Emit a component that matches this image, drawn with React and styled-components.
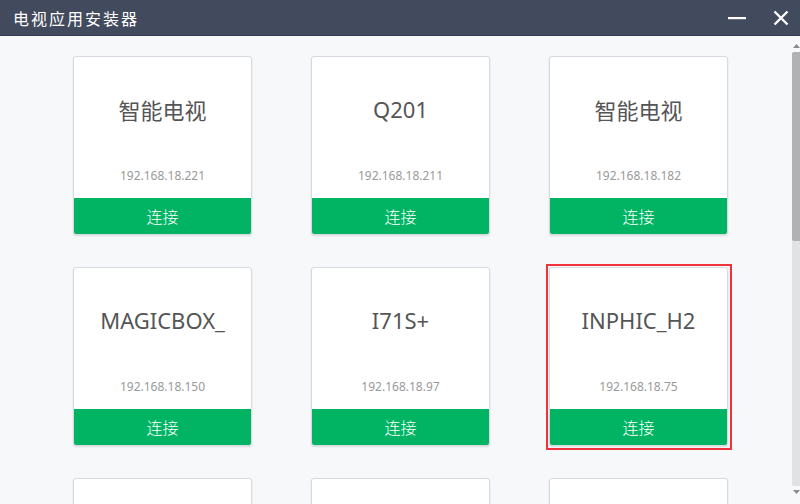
import React from "react";
import styled, { createGlobalStyle } from "styled-components";

const GlobalStyle = createGlobalStyle`
  html, body {
    margin: 0;
    padding: 0;
    width: 800px;
    height: 504px;
    overflow: hidden;
    background: #f7f8fa;
    font-family: "Noto Sans CJK SC", "Noto Sans", "Liberation Sans", sans-serif;
  }
`;

const Window = styled.div`
  width: 800px;
  height: 504px;
  display: flex;
  flex-direction: column;
  background: #f7f8fa;
`;

const TitleBar = styled.div`
  height: 35px;
  flex: 0 0 35px;
  display: flex;
  align-items: center;
  padding: 0 0 0 13px;
  background: #424a5e;
  border-bottom: 1px solid #353c4d;
  color: #fff;
  font-size: 16px;
`;

const Title = styled.div`
  flex: 1;
  letter-spacing: 2px;
`;

const WinButton = styled.button`
  width: 30px;
  height: 35px;
  border: 0;
  padding: 0;
  margin-right: ${(p) => p.$mr || 0}px;
  background: transparent;
  display: flex;
  align-items: center;
  justify-content: center;
  cursor: pointer;
`;

const Body = styled.div`
  flex: 1;
  display: flex;
  min-height: 0;
`;

const Content = styled.div`
  flex: 1;
  overflow: hidden;
  padding: 20px 0 0 73px;
`;

const Grid = styled.div`
  display: grid;
  grid-template-columns: repeat(3, 179px);
  grid-auto-rows: 179px;
  column-gap: 59px;
  row-gap: 32px;
`;

const Card = styled.div`
  position: relative;
  box-sizing: border-box;
  display: flex;
  flex-direction: column;
  background: #fff;
  border: 1px solid #d7dae1;
  border-radius: 3px;
  box-shadow: 0 1px 2px rgba(0, 0, 0, 0.12);

  &::after {
    content: "";
    display: ${(p) => (p.$selected ? "block" : "none")};
    position: absolute;
    top: -4px;
    left: -4px;
    right: -5px;
    bottom: -5px;
    border: 2px solid #f0333a;
    pointer-events: none;
  }
`;

const Name = styled.div`
  margin-top: 33px;
  text-align: center;
  font-family: ${(p) =>
    p.$latin ? '"Noto Sans", "Liberation Sans", sans-serif' : '"Noto Sans CJK SC", sans-serif'};
  font-size: 22px;
  color: #555;
  line-height: 38px;
`;

const Ip = styled.div`
  margin: auto 0 12px;
  text-align: center;
  font-family: "Noto Sans", "Liberation Sans", sans-serif;
  font-size: 12px;
  color: #9a9a9a;
  line-height: 20px;
`;

const Connect = styled.button`
  height: 36px;
  flex: 0 0 36px;
  border: 0;
  margin: 0;
  border-radius: 0 0 2px 2px;
  background: #00b463;
  color: #fff;
  font-family: "Noto Sans CJK SC", sans-serif;
  font-size: 16px;
  font-weight: 300;
  cursor: pointer;
`;

const ScrollBar = styled.div`
  width: 8px;
  flex: 0 0 8px;
  display: flex;
  flex-direction: column;
  align-items: stretch;
  padding: 6px 0 8px 0;
  box-sizing: border-box;
`;

const Arrow = styled.div`
  height: 8px;
  display: flex;
  justify-content: center;
  align-items: center;
`;

const Track = styled.div`
  flex: 1;
  margin: 2px 0;
  background: #e2e2e2;
  border-radius: 2px 0 0 2px;
  display: flex;
  flex-direction: column;
`;

const Thumb = styled.div`
  height: 189px;
  background: #b2b2b2;
  border-radius: 2px 0 0 2px;
`;

const devices = [
  { name: "智能电视", ip: "192.168.18.221" },
  { name: "Q201", ip: "192.168.18.211", latin: true },
  { name: "智能电视", ip: "192.168.18.182" },
  { name: "MAGICBOX_", ip: "192.168.18.150", latin: true },
  { name: "I71S+", ip: "192.168.18.97", latin: true },
  { name: "INPHIC_H2", ip: "192.168.18.75", latin: true, selected: true },
];

export default function App() {
  return (
    <Window>
      <GlobalStyle />
      <TitleBar>
        <Title>电视应用安装器</Title>
        <WinButton $mr={14} aria-label="minimize">
          <svg width="18" height="4" viewBox="0 0 18 4">
            <rect x="0" y="1" width="18" height="2.2" fill="#fff" />
          </svg>
        </WinButton>
        <WinButton $mr={4} aria-label="close">
          <svg width="16" height="16" viewBox="0 0 16 16">
            <path d="M1.5 1.5 L14.5 14.5 M14.5 1.5 L1.5 14.5" stroke="#fff" strokeWidth="2.4" />
          </svg>
        </WinButton>
      </TitleBar>
      <Body>
        <Content>
          <Grid>
            {devices.map((d, i) => (
              <Card key={i} $selected={d.selected}>
                <Name $latin={d.latin}>{d.name}</Name>
                <Ip>{d.ip}</Ip>
                <Connect>连接</Connect>
              </Card>
            ))}
            {/* next row, scrolled below the fold */}
            <Card />
            <Card />
            <Card />
          </Grid>
        </Content>
        <ScrollBar>
          <Arrow>
            <svg width="7" height="4" viewBox="0 0 7 4">
              <path d="M0 4 L3.5 0 L7 4 Z" fill="#8a8a8a" />
            </svg>
          </Arrow>
          <Track>
            <Thumb />
          </Track>
          <Arrow>
            <svg width="7" height="4" viewBox="0 0 7 4">
              <path d="M0 0 L3.5 4 L7 0 Z" fill="#8a8a8a" />
            </svg>
          </Arrow>
        </ScrollBar>
      </Body>
    </Window>
  );
}
